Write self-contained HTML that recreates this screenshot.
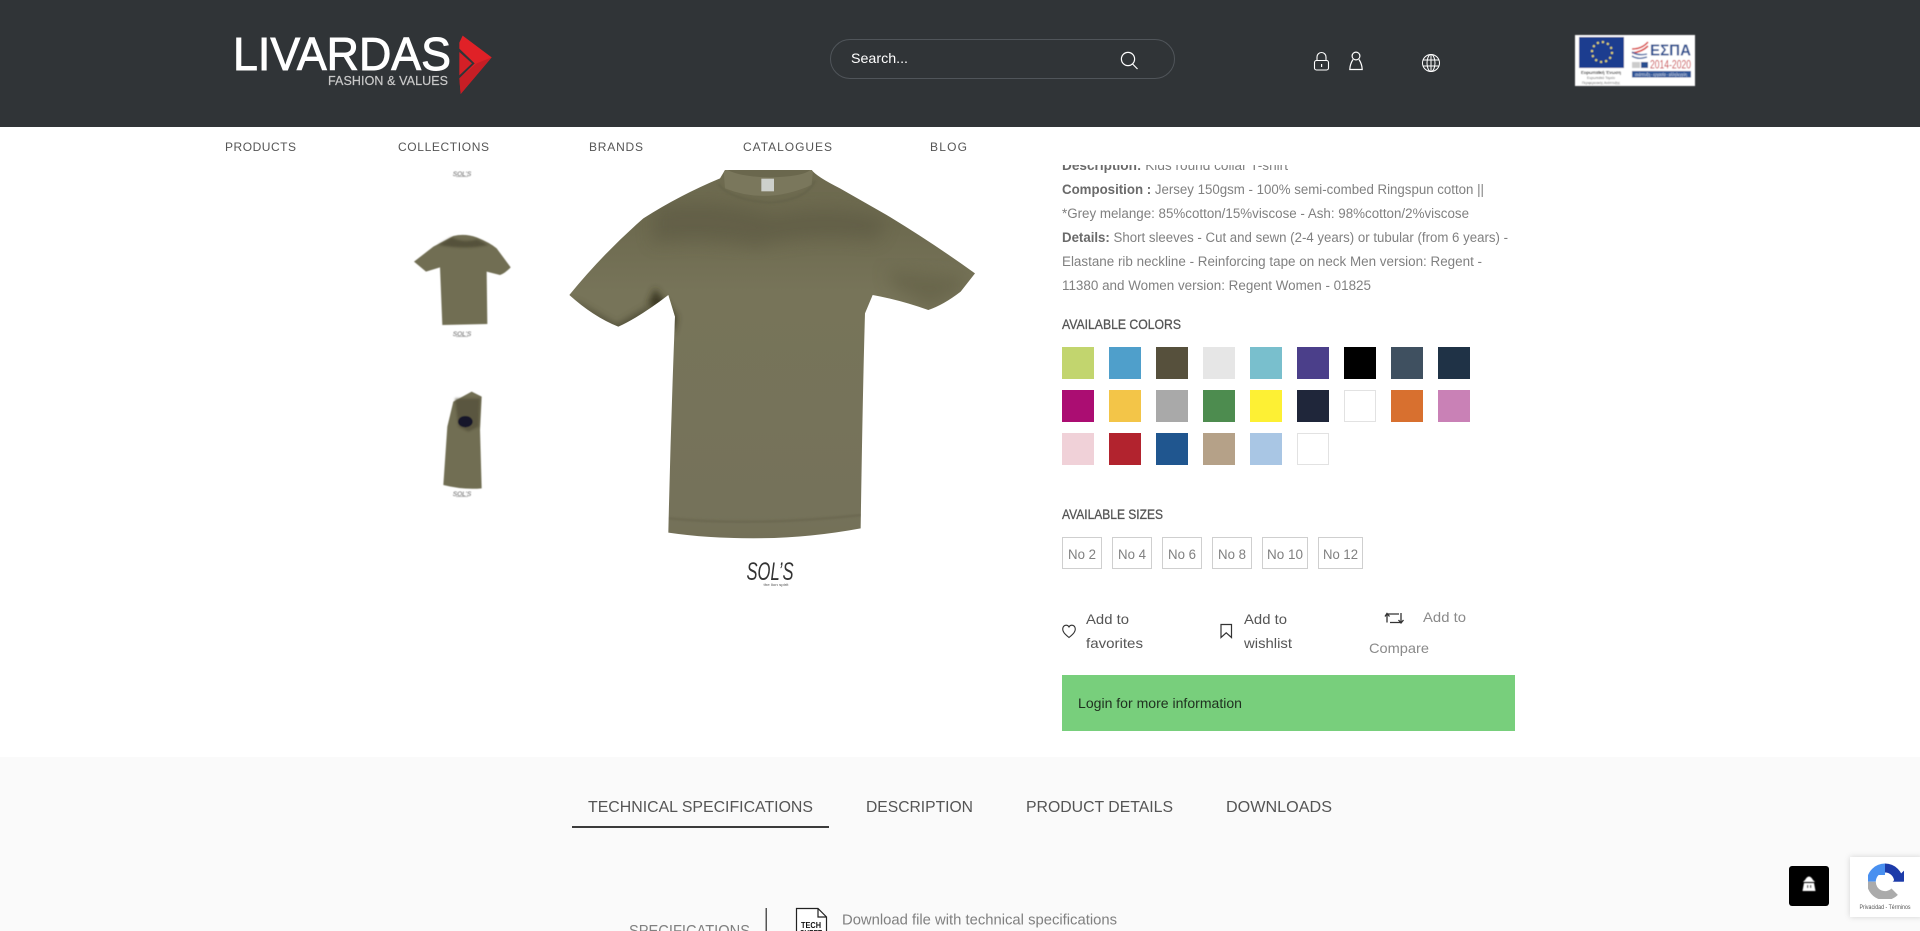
<!DOCTYPE html>
<html lang="en">
<head>
<meta charset="utf-8">
<title>Livardas - Product</title>
<style>
html,body{margin:0;padding:0;width:1920px;height:931px;overflow:hidden;background:#fff}
svg{display:block}
text{font-family:"Liberation Sans",Arial,sans-serif}
</style>
</head>
<body>
<svg width="1920" height="931" viewBox="0 0 1920 931" xmlns="http://www.w3.org/2000/svg">
<defs>
<linearGradient id="sh" x1="0" y1="0" x2="0" y2="1">
<stop offset="0" stop-color="#6e6b50"/><stop offset=".15" stop-color="#6d6a4f"/><stop offset=".3" stop-color="#777459"/><stop offset=".8" stop-color="#75725a"/><stop offset="1" stop-color="#6f6c52"/>
</linearGradient>
<filter id="b25" x="-30%" y="-30%" width="160%" height="160%"><feGaussianBlur stdDeviation="25"/></filter>
<filter id="b10" x="-30%" y="-30%" width="160%" height="160%"><feGaussianBlur stdDeviation="10"/></filter>
<filter id="b3" x="-20%" y="-20%" width="140%" height="140%"><feGaussianBlur stdDeviation="3"/></filter>
<filter id="b1"><feGaussianBlur stdDeviation=".45"/></filter>
<clipPath id="tee"><path d="M555 30L815 30Q830 50 900 85L1040 165Q1180 250 1305 340L1262 395Q1210 435 1165 450Q1080 420 998 405L975 460Q968 700 962 1105Q800 1135 640 1135Q500 1135 385 1118Q392 800 405 470L385 405Q300 470 235 500Q160 470 88 405Q190 280 310 175Q420 105 540 55Z"/></clipPath>
<clipPath id="main"><rect x="0" y="165" width="1920" height="766"/></clipPath>
</defs>

<rect width="1920" height="931" fill="#fff"/>

<!-- main t-shirt -->
<g transform="translate(540,160) scale(.33333)">
<g clip-path="url(#tee)">
<rect x="0" y="0" width="1440" height="1320" fill="url(#sh)"/>
<path d="M340 140Q520 110 700 165Q880 130 1040 175L1010 240Q800 215 650 260Q480 225 340 250Z" fill="#5c5942" filter="url(#b25)" opacity=".55"/>
<path d="M345 385L410 470L400 520L325 430Z" fill="#34321f" filter="url(#b10)" opacity=".85"/>
<path d="M120 430L230 495L340 430L310 480L230 520L90 420Z" fill="#4a4732" filter="url(#b10)" opacity=".8"/>
<path d="M1040 330Q1150 340 1270 350L1270 390L1170 445L1060 380Z" fill="#625f45" filter="url(#b25)" opacity=".6"/>
<path d="M385 1075Q650 1100 965 1065" stroke="#5f5c45" stroke-width="3" fill="none" filter="url(#b3)"/>
<path d="M550 20H820L815 75Q680 135 555 85Z" fill="#7a775c"/>
<path d="M555 25H815Q800 50 690 52Q590 50 555 25Z" fill="#6a674d"/>
<path d="M535 72Q570 120 690 128Q800 120 825 62" stroke="#615e46" stroke-width="4" fill="none" filter="url(#b3)"/>
<rect x="664" y="56" width="38" height="38" fill="#cdd0cb"/>
</g>
<rect x="0" y="0" width="1440" height="27" fill="#fff"/>
</g>
<text x="770" y="580" font-size="25" font-style="italic" fill="#333" text-anchor="middle" textLength="47" lengthAdjust="spacingAndGlyphs">SOL’S</text>
<text x="776" y="586" font-size="4" fill="#555" text-anchor="middle" textLength="25" lengthAdjust="spacingAndGlyphs">the lion spirit</text>

<!-- thumbs -->
<g filter="url(#b1)">
<text x="462" y="176" font-size="6.5" font-style="italic" fill="#555" text-anchor="middle">SOL’S</text>
<rect x="456" y="176" width="12" height="1" fill="#bbb"/>
<g transform="translate(390,160) scale(.33333)">
<path d="M190 228Q225 220 260 232Q300 248 320 265L362 322Q345 340 330 345L290 335L292 492L157 495L150 322L108 335L72 305L130 260Z" fill="#716e53"/>
<path d="M185 232Q220 250 262 238L295 255Q230 270 145 255Z" fill="#54513a" filter="url(#b3)"/>
<path d="M245 695L275 710L270 810L275 985Q220 990 160 975L172 800L190 725Z" fill="#716e53"/>
<path d="M195 715L270 715L266 800L235 815L205 800Z" fill="#514e38" filter="url(#b3)" opacity=".7"/>
<ellipse cx="226" cy="785" rx="22" ry="17" fill="#14142a"/>
</g>
<text x="462" y="336" font-size="6.5" font-style="italic" fill="#555" text-anchor="middle">SOL’S</text>
<rect x="456" y="336" width="12" height="1" fill="#bbb"/>
<text x="462" y="496" font-size="6.5" font-style="italic" fill="#555" text-anchor="middle">SOL’S</text>
<rect x="456" y="496" width="12" height="1" fill="#bbb"/>
</g>

<!-- description -->
<g font-size="13.5" fill="#808080">
<g clip-path="url(#main)"><text x="1062" y="170" textLength="226" lengthAdjust="spacingAndGlyphs"><tspan font-weight="bold" fill="#6a6a6a">Description:</tspan> Kids round collar T-shirt</text></g>
<text x="1062" y="194" textLength="422" lengthAdjust="spacingAndGlyphs"><tspan font-weight="bold" fill="#6a6a6a">Composition :</tspan> Jersey 150gsm - 100% semi-combed Ringspun cotton ||</text>
<text x="1062" y="218" textLength="407" lengthAdjust="spacingAndGlyphs">*Grey melange: 85%cotton/15%viscose - Ash: 98%cotton/2%viscose</text>
<text x="1062" y="242" textLength="446" lengthAdjust="spacingAndGlyphs"><tspan font-weight="bold" fill="#6a6a6a">Details:</tspan> Short sleeves - Cut and sewn (2-4 years) or tubular (from 6 years) -</text>
<text x="1062" y="266" textLength="420" lengthAdjust="spacingAndGlyphs">Elastane rib neckline - Reinforcing tape on neck Men version: Regent -</text>
<text x="1062" y="290" textLength="309" lengthAdjust="spacingAndGlyphs">11380 and Women version: Regent Women - 01825</text>
</g>
<text x="1062" y="329" font-size="13.5" fill="#555" stroke="#555" stroke-width=".3" textLength="119" lengthAdjust="spacingAndGlyphs">AVAILABLE COLORS</text>

<!-- swatches -->
<g>
<rect x="1062" y="347" width="32" height="32" fill="#c2d56e"/>
<rect x="1109" y="347" width="32" height="32" fill="#4f9fcb"/>
<rect x="1156" y="347" width="32" height="32" fill="#56503c"/>
<rect x="1203" y="347" width="32" height="32" fill="#e6e6e6"/>
<rect x="1250" y="347" width="32" height="32" fill="#79bfcd"/>
<rect x="1297" y="347" width="32" height="32" fill="#4b3f8a"/>
<rect x="1344" y="347" width="32" height="32" fill="#000"/>
<rect x="1391" y="347" width="32" height="32" fill="#3f5060"/>
<rect x="1438" y="347" width="32" height="32" fill="#1f3246"/>
<rect x="1062" y="390" width="32" height="32" fill="#ab0d72"/>
<rect x="1109" y="390" width="32" height="32" fill="#f3c548"/>
<rect x="1156" y="390" width="32" height="32" fill="#a9a9a9"/>
<rect x="1203" y="390" width="32" height="32" fill="#4d8c4f"/>
<rect x="1250" y="390" width="32" height="32" fill="#fdf034"/>
<rect x="1297" y="390" width="32" height="32" fill="#1f263a"/>
<rect x="1344.5" y="390.5" width="31" height="31" fill="#fff" stroke="#e2e2e2"/>
<rect x="1391" y="390" width="32" height="32" fill="#d8702f"/>
<rect x="1438" y="390" width="32" height="32" fill="#c981b6"/>
<rect x="1062" y="433" width="32" height="32" fill="#f0d1d8"/>
<rect x="1109" y="433" width="32" height="32" fill="#b2232e"/>
<rect x="1156" y="433" width="32" height="32" fill="#20568f"/>
<rect x="1203" y="433" width="32" height="32" fill="#b5a188"/>
<rect x="1250" y="433" width="32" height="32" fill="#a9c6e4"/>
<rect x="1297.5" y="433.5" width="31" height="31" fill="#fff" stroke="#e2e2e2"/>
</g>

<text x="1062" y="519" font-size="13.5" fill="#555" stroke="#555" stroke-width=".3" textLength="101" lengthAdjust="spacingAndGlyphs">AVAILABLE SIZES</text>

<!-- sizes -->
<g fill="#fff" stroke="#cfcfcf">
<rect x="1062.5" y="537.5" width="39" height="31"/>
<rect x="1112.5" y="537.5" width="39" height="31"/>
<rect x="1162.5" y="537.5" width="39" height="31"/>
<rect x="1212.5" y="537.5" width="39" height="31"/>
<rect x="1262.5" y="537.5" width="45" height="31"/>
<rect x="1318.5" y="537.5" width="44" height="31"/>
</g>
<g font-size="13.5" fill="#808080">
<text x="1068" y="559" textLength="28" lengthAdjust="spacingAndGlyphs">No 2</text>
<text x="1118" y="559" textLength="28" lengthAdjust="spacingAndGlyphs">No 4</text>
<text x="1168" y="559" textLength="28" lengthAdjust="spacingAndGlyphs">No 6</text>
<text x="1218" y="559" textLength="28" lengthAdjust="spacingAndGlyphs">No 8</text>
<text x="1267" y="559" textLength="36" lengthAdjust="spacingAndGlyphs">No 10</text>
<text x="1323" y="559" textLength="35" lengthAdjust="spacingAndGlyphs">No 12</text>
</g>

<!-- actions -->
<path d="M1069 637.5C1064 633.500 1062.700 631.500 1062.700 629C1062.700 626.600 1064.400 625.200 1066.200 625.200C1067.400 625.200 1068.400 625.900 1069 627C1069.600 625.900 1070.600 625.200 1071.800 625.200C1073.600 625.200 1075.300 626.600 1075.300 629C1075.300 631.500 1074 633.500 1069 637.500Z" fill="none" stroke="#333" stroke-width="1.100"/>
<path d="M1221 624.500H1231.500V637.500L1226.200 632.800L1221 637.500Z" fill="none" stroke="#333" stroke-width="1.200"/>
<g fill="none" stroke="#333" stroke-width="1.300">
<path d="M1387 622.500V614H1399"/><path d="M1385 616.500L1387 613.500L1389.500 616.500"/>
<path d="M1401 613V622.500H1390"/><path d="M1398.500 620L1401 623L1403.500 620"/>
</g>
<g font-size="14" fill="#555">
<text x="1086" y="624" textLength="43" lengthAdjust="spacingAndGlyphs">Add to</text>
<text x="1086" y="648" textLength="57" lengthAdjust="spacingAndGlyphs">favorites</text>
<text x="1244" y="624" textLength="43" lengthAdjust="spacingAndGlyphs">Add to</text>
<text x="1244" y="648" textLength="48" lengthAdjust="spacingAndGlyphs">wishlist</text>
</g>
<g font-size="14" fill="#8a8a8a">
<text x="1423" y="622" textLength="43" lengthAdjust="spacingAndGlyphs">Add to</text>
<text x="1369" y="653" textLength="60" lengthAdjust="spacingAndGlyphs">Compare</text>
</g>

<!-- login -->
<rect x="1062" y="675" width="453" height="56" fill="#78cf7c"/>
<text x="1078" y="708" font-size="13.500" fill="#1f2f1f" textLength="164" lengthAdjust="spacingAndGlyphs">Login for more information</text>

<!-- bottom section -->
<rect x="0" y="757" width="1920" height="174" fill="#fafafa"/>
<g font-size="15.500" fill="#555">
<text x="588" y="812" textLength="225" lengthAdjust="spacingAndGlyphs">TECHNICAL SPECIFICATIONS</text>
<text x="866" y="812" textLength="107" lengthAdjust="spacingAndGlyphs">DESCRIPTION</text>
<text x="1026" y="812" textLength="147" lengthAdjust="spacingAndGlyphs">PRODUCT DETAILS</text>
<text x="1226" y="812" textLength="106" lengthAdjust="spacingAndGlyphs">DOWNLOADS</text>
</g>
<rect x="572" y="826" width="257" height="2" fill="#3c3c3c"/>
<text x="629" y="936" font-size="15.500" fill="#808080" textLength="121" lengthAdjust="spacingAndGlyphs">SPECIFICATIONS</text>
<rect x="765.500" y="908" width="1.500" height="23" fill="#555"/>
<path d="M796.500 931V908.500H818L826.500 917V931" fill="#fff" stroke="#222" stroke-width="1.200"/>
<path d="M818 908.500V917H826.500" fill="none" stroke="#222" stroke-width="1.200"/>
<text x="811" y="928" font-size="8" font-weight="bold" fill="#111" text-anchor="middle" textLength="20" lengthAdjust="spacingAndGlyphs">TECH</text>
<text x="811" y="936" font-size="8" font-weight="bold" fill="#111" text-anchor="middle" textLength="22" lengthAdjust="spacingAndGlyphs">SHEET</text>
<text x="842" y="924.500" font-size="14.500" fill="#808080" textLength="275" lengthAdjust="spacingAndGlyphs">Download file with technical specifications</text>

<!-- header -->
<rect x="0" y="0" width="1920" height="127" fill="#303437"/>
<rect x="0" y="127" width="1920" height="38" fill="#fff"/>
<text x="233" y="70" font-size="46" fill="#fff" stroke="#fff" stroke-width=".9" textLength="218" lengthAdjust="spacingAndGlyphs">LIVARDAS</text>
<text x="328" y="85" font-size="12.500" fill="#c9c9c9" stroke="#c9c9c9" stroke-width=".2" textLength="120" lengthAdjust="spacing">FASHION &amp; VALUES</text>
<g transform="translate(200,0) scale(.33333)">
<path d="M788 107L875 172L782 282L778 235L824 190L778 146V128Z" fill="#e02127"/>
<path d="M778 156L816 190L778 226Z" fill="#d41f26"/>
<path d="M830 190L875 172L782 282L778 235Z" fill="#c71e25"/>
</g>

<g font-size="12" fill="#555">
<text x="225" y="151" textLength="71" lengthAdjust="spacing">PRODUCTS</text>
<text x="398" y="151" textLength="91" lengthAdjust="spacing">COLLECTIONS</text>
<text x="589" y="151" textLength="54" lengthAdjust="spacing">BRANDS</text>
<text x="743" y="151" textLength="89" lengthAdjust="spacing">CATALOGUES</text>
<text x="930" y="151" textLength="37" lengthAdjust="spacing">BLOG</text>
</g>

<!-- search -->
<rect x="830.500" y="39.500" width="344" height="39" rx="19.500" fill="none" stroke="#50555a"/>
<text x="851" y="63" font-size="14" fill="#fff" textLength="57" lengthAdjust="spacingAndGlyphs">Search...</text>
<circle cx="1128" cy="59" r="6.600" fill="none" stroke="#fff" stroke-width="1.200"/>
<path d="M1132.600 64L1137.500 69" stroke="#fff" stroke-width="1.200"/>

<!-- lock -->
<rect x="1314.500" y="60.500" width="14" height="9.500" rx="2" fill="none" stroke="#fff" stroke-width="1.100"/>
<path d="M1317 60.500V57A4.500 4.500 0 0 1 1326 57V60.500" fill="none" stroke="#fff" stroke-width="1.100"/>
<rect x="1321" y="64" width="1.200" height="3" fill="#fff"/>
<!-- person -->
<circle cx="1356" cy="56" r="3.900" fill="none" stroke="#fff" stroke-width="1.200"/>
<path d="M1353 59.500Q1350 64 1349.800 69.500H1362.200Q1362 64 1359 59.500" fill="none" stroke="#fff" stroke-width="1.200"/>
<!-- globe -->
<g fill="none" stroke="#fff" stroke-width="1">
<circle cx="1431" cy="63" r="8.500"/>
<ellipse cx="1431" cy="63" rx="4" ry="8.500"/>
<path d="M1431 54.500V71.500M1423 60H1439M1423 66H1439"/>
</g>

<!-- ESPA -->
<g filter="url(#b1)">
<rect x="1575" y="35" width="120" height="51" fill="#fff"/>
<rect x="1579" y="37" width="45" height="31" fill="#1f3c8f"/>
<circle cx="1602" cy="52" r="10" fill="none" stroke="#e7dd6a" stroke-width="2" stroke-dasharray="2 3.200"/>
<text x="1601" y="74" font-size="4.500" fill="#333" text-anchor="middle" textLength="40" lengthAdjust="spacingAndGlyphs" font-weight="bold">Ευρωπαϊκή Ένωση</text>
<text x="1601" y="79" font-size="3.500" fill="#666" text-anchor="middle" textLength="28" lengthAdjust="spacingAndGlyphs">Ευρωπαϊκό Ταμείο</text>
<text x="1601" y="84" font-size="3.500" fill="#666" text-anchor="middle" textLength="38" lengthAdjust="spacingAndGlyphs">Περιφερειακής Ανάπτυξης</text>
<path d="M1632 49Q1642 49 1648 42" fill="none" stroke="#d9433f" stroke-width="1.600"/>
<path d="M1632 53Q1642 52 1648 46" fill="none" stroke="#d9433f" stroke-width="1.600"/>
<path d="M1632 52Q1638 56 1647 54" fill="none" stroke="#3d5f9f" stroke-width="1.400"/>
<path d="M1632 56Q1638 60 1647 57" fill="none" stroke="#3d5f9f" stroke-width="1.400"/>
<text x="1650" y="55.500" font-size="16" font-weight="bold" fill="#2b4f90" textLength="41" lengthAdjust="spacingAndGlyphs">ΕΣΠΑ</text>
<text x="1650" y="68.500" font-size="12" fill="#c8343a" textLength="41" lengthAdjust="spacingAndGlyphs">2014-2020</text>
<rect x="1632" y="62" width="8" height="6" fill="#ccc"/>
<rect x="1641" y="62" width="7" height="6" fill="#2b4f90"/>
<rect x="1632" y="71" width="59" height="6.500" fill="#2f5597"/>
<text x="1661" y="76" font-size="4.500" fill="#dfe6f2" text-anchor="middle" textLength="52" lengthAdjust="spacingAndGlyphs">ανάπτυξη - εργασία - αλληλεγγύη</text>
</g>

<!-- floating button -->
<rect x="1789" y="866" width="40" height="40" rx="3" fill="#000"/>
<g filter="url(#b1)">
<path d="M1805 880Q1809 873 1813 880L1815 882H1803Z" fill="#fff"/>
<path d="M1804 883H1814L1815.500 891H1802.500Z" fill="#fff"/>
<rect x="1807" y="885" width="1.200" height="3" fill="#222"/><rect x="1810" y="885" width="1.200" height="3" fill="#222"/>
</g>

<!-- recaptcha -->
<rect x="1850" y="857" width="72" height="60" fill="#888" filter="url(#b3)" opacity=".35"/>
<rect x="1850" y="857" width="72" height="60" fill="#fff"/>
<g transform="translate(1760,840) scale(.33333)" fill="none" stroke-width="27" filter="url(#b1)">
<path d="M334 125A41 41 0 0 1 375 84" stroke="#4a90f0"/>
<path d="M375 84A41 41 0 0 1 416 125" stroke="#1c3aa9"/>
<path d="M334 125A41 41 0 0 0 404 155" stroke="#ababab"/>
<path d="M375 70V105H340Z" fill="#4a90f0" stroke="none"/>
<path d="M432 92V125H398Z" fill="#1c3aa9" stroke="none"/>
</g>
<text x="1885" y="909" font-size="6.500" fill="#555" text-anchor="middle" textLength="51" lengthAdjust="spacingAndGlyphs">Privacidad - Términos</text>
</svg>
</body>
</html>
